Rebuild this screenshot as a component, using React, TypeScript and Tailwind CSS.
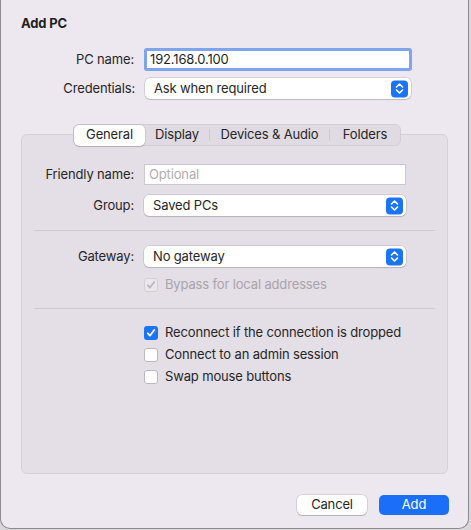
import React from 'react';

const font = { fontFamily: 'Inter, "Noto Sans", sans-serif', letterSpacing: '-0.15px' };

const Stepper = () => (
  <div className="absolute right-[3px] top-1/2 -translate-y-1/2 w-[17px] h-[17px] rounded-[4px] bg-[#1b74f6] flex items-center justify-center">
    <svg width="9" height="12" viewBox="0 0 9 12" fill="none" stroke="white" strokeWidth="1.6" strokeLinecap="round" strokeLinejoin="round">
      <path d="M1.5 4.5 L4.5 1.5 L7.5 4.5" />
      <path d="M1.5 7.5 L4.5 10.5 L7.5 7.5" />
    </svg>
  </div>
);

const Select = ({ value, className = '' }: { value: string; className?: string }) => (
  <div className={`relative h-[21px] bg-white rounded-[5px] shadow-[0_0_0_0.5px_rgba(0,0,0,0.18),0_1px_1px_rgba(0,0,0,0.12)] flex items-center pl-[9px] text-[13px] text-[#262626] ${className}`}>
    {value}
    <Stepper />
  </div>
);

const Check = ({ checked, disabled }: { checked?: boolean; disabled?: boolean }) => {
  if (checked && !disabled) {
    return (
      <div className="w-[14px] h-[14px] rounded-[3px] bg-[#1b74f6] flex items-center justify-center shrink-0">
        <svg width="10" height="10" viewBox="0 0 10 10" fill="none" stroke="white" strokeWidth="1.8" strokeLinecap="round" strokeLinejoin="round">
          <path d="M1.8 5.3 L4 7.6 L8.3 2" />
        </svg>
      </div>
    );
  }
  return (
    <div className={`w-[14px] h-[14px] rounded-[3px] border shrink-0 ${disabled ? 'border-[#d4cfd6] bg-[#ebe6ec]' : 'border-[#bdb8bf] bg-white'} flex items-center justify-center`}>
      {checked && (
        <svg width="10" height="10" viewBox="0 0 10 10" fill="none" stroke="#b8b3ba" strokeWidth="1.6" strokeLinecap="round" strokeLinejoin="round">
          <path d="M1.8 5.3 L4 7.6 L8.3 2" />
        </svg>
      )}
    </div>
  );
};

const Row = ({ label, children, className = '', labelW = 'w-[122px]' }: { label: string; children: React.ReactNode; className?: string; labelW?: string }) => (
  <div className={`flex items-center ${className}`}>
    <div className={`${labelW} text-right text-[13px] text-[#262626] pr-[10px] shrink-0`}>{label}</div>
    {children}
  </div>
);

export default function App() {
  return (
    <div className="w-[471px] h-[530px] bg-[#d9d6da] relative" style={font}>
      <div className="w-[469px] h-[529px] bg-[#ede7ef] border border-t-0 border-[#8e8a90] rounded-b-[10px] flex flex-col">
        <div className="pl-[20px] pt-[15px] text-[13px] font-bold text-[#1f1f1f] leading-[16px]">Add PC</div>

        <Row label="PC name:" labelW="w-[123px]" className="mt-[17px] pl-[20px]">
          <div className="w-[268px] h-[23px] bg-white border-[3px] border-[#7ea4ee] rounded-[3px] flex items-center pl-[3px] text-[13px] text-[#1f1f1f]">
            192.168.0.100
          </div>
        </Row>
        <Row label="Credentials:" labelW="w-[124px]" className="mt-[7px] pl-[20px]">
          <Select value="Ask when required" className="w-[266px]" />
        </Row>

        <div className="relative mx-[20px] mt-[35px] h-[340px] bg-[#e4dee6] border border-[#d6d0d8] rounded-[6px] flex flex-col">
          <div className="absolute -top-[11px] left-[51px] h-[22px] w-[328px] bg-[#e0dae2] border border-[#d3cdd5] rounded-[6px] flex items-center text-[13px] text-[#262626]">
            <div className="w-[71px] h-[21px] bg-white rounded-[5px] shadow-[0_0_0_0.5px_rgba(0,0,0,0.15),0_1px_1px_rgba(0,0,0,0.15)] flex items-center justify-center">General</div>
            <div className="w-[64px] flex items-center justify-center">Display</div>
            <div className="w-px h-[12px] bg-[#cfc9d1]" />
            <div className="w-[119px] flex items-center justify-center">Devices &amp; Audio</div>
            <div className="w-px h-[12px] bg-[#cfc9d1]" />
            <div className="flex-1 flex items-center justify-center">Folders</div>
          </div>

          <Row label="Friendly name:" className="mt-[29px]">
            <div className="w-[262px] h-[21px] bg-white border border-[#cdc8cf] flex items-center pl-[4px] text-[13px] text-[#b1acb3]">Optional</div>
          </Row>
          <Row label="Group:" className="mt-[10px]">
            <Select value="Saved PCs" className="w-[262px]" />
          </Row>

          <div className="mx-[12px] mt-[14px] h-px bg-[#cfc9d1]" />

          <Row label="Gateway:" className="mt-[15px]">
            <Select value="No gateway" className="w-[262px]" />
          </Row>
          <div className="flex items-center gap-[7px] pl-[122px] mt-[8px] text-[13px] text-[#a9a4ab]">
            <Check checked disabled />
            Bypass for local addresses
          </div>

          <div className="mx-[12px] mt-[13px] h-px bg-[#cfc9d1]" />

          <div className="flex flex-col gap-[8px] pl-[122px] mt-[17px] text-[13px] text-[#262626]">
            <div className="flex items-center gap-[7px] h-[14px]"><Check checked />Reconnect if the connection is dropped</div>
            <div className="flex items-center gap-[7px] h-[14px]"><Check />Connect to an admin session</div>
            <div className="flex items-center gap-[7px] h-[14px]"><Check />Swap mouse buttons</div>
          </div>
        </div>

        <div className="flex justify-end gap-[12px] pr-[19px] mt-[21px]">
          <div className="w-[70px] h-[20px] bg-white rounded-[5px] shadow-[0_0_0_0.5px_rgba(0,0,0,0.18),0_1px_1px_rgba(0,0,0,0.15)] flex items-center justify-center text-[13px] text-[#262626]">Cancel</div>
          <div className="w-[70px] h-[20px] bg-[#1a6ff6] rounded-[5px] flex items-center justify-center text-[13px] text-white">Add</div>
        </div>
      </div>
    </div>
  );
}
